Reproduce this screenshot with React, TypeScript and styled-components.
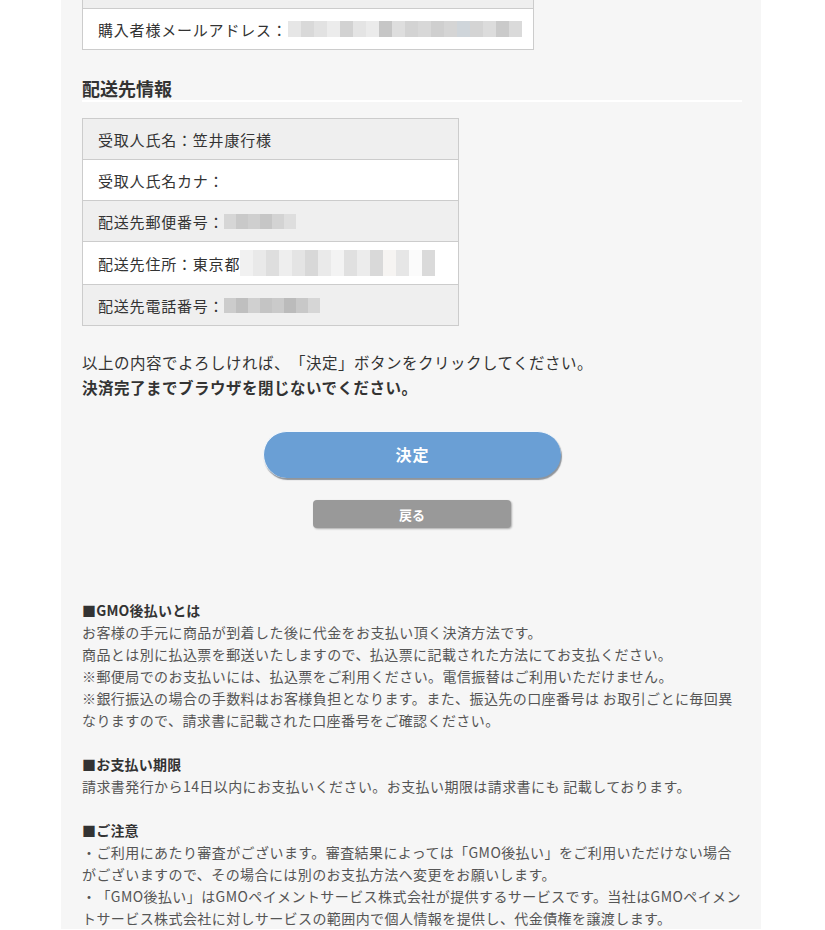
import React from "react";
import styled, { createGlobalStyle } from "styled-components";

const Global = createGlobalStyle`
  html, body { margin: 0; padding: 0; background: #ffffff; }
  body {
    font-family: "Noto Sans CJK JP", "Noto Sans", sans-serif;
    color: #333;
    text-spacing-trim: space-all;
  }
`;

const Page = styled.div`
  width: 700px;
  margin: -33px 0 0 61px;
  background: #f6f6f6;
  padding: 0 19px 0 21px;
  box-sizing: border-box;
`;

const Table = styled.div<{ $w: number }>`
  width: ${(p) => p.$w}px;
  box-sizing: border-box;
  border: 1px solid #cccccc;
  display: flex;
  flex-direction: column;
`;

const Row = styled.div<{ $alt?: boolean }>`
  display: flex;
  align-items: center;
  min-height: 40px;
  padding: 0 15px;
  background: ${(p) => (p.$alt ? "#efefef" : "#ffffff")};
  font-size: 15px;
  letter-spacing: 0.8px;
  white-space: nowrap;
  color: #333;
  & + & { border-top: 1px solid #cccccc; }
`;

const Mosaic = styled.div<{ $h: number; $cw: number }>`
  display: inline-flex;
  flex-shrink: 0;
  height: ${(p) => p.$h}px;
  margin: ${(p) => (p.$h > 20 ? "8px 0" : "0")};
  & > span { width: ${(p) => p.$cw}px; height: 100%; display: block; }
`;

const Cell = styled.span<{ $c: string }>`
  background: ${(p) => p.$c};
`;

const Heading = styled.h2`
  margin: 26px 0 16px;
  font-size: 18px;
  line-height: 24px;
  font-weight: 700;
  color: #333;
  border-bottom: 2px solid #ffffff;
`;

const Notice = styled.p`
  margin: 24px 0 0;
  font-size: 15.5px;
  line-height: 25px;
  letter-spacing: 0.5px;
  color: #333;
`;

const Strong = styled.strong`
  font-weight: 700;
  letter-spacing: 0.5px;
`;

const Buttons = styled.div`
  margin-top: 31px;
  display: flex;
  flex-direction: column;
  align-items: center;
  gap: 22px;
`;

const PrimaryButton = styled.button`
  width: 298px;
  height: 47px;
  padding: 0 0 3px;
  border: none;
  border-top: 1px solid #f4f8fc;
  border-left: 1px solid #f4f8fc;
  border-radius: 24px;
  background: #6a9fd5;
  box-shadow: 1px 2px 1px rgba(60, 70, 80, 0.55);
  color: #fff;
  font-family: inherit;
  font-size: 16px;
  font-weight: 700;
  letter-spacing: 1px;
  cursor: pointer;
`;

const BackButton = styled.button`
  width: 198px;
  height: 28px;
  border: none;
  border-radius: 4px;
  background: #999999;
  box-shadow: 1px 1px 2px rgba(0, 0, 0, 0.3);
  color: #fff;
  font-family: inherit;
  font-size: 13px;
  font-weight: 700;
  cursor: pointer;
`;

const Info = styled.div`
  margin-top: 71px;
  font-size: 14px;
  line-height: 22px;
  letter-spacing: 0.42px;
  color: #555;
  white-space: nowrap;
`;

const InfoTitle = styled.div`
  font-weight: 700;
  letter-spacing: 0.2px;
  color: #333;
`;

const Spacer = styled.div`
  height: 22px;
`;

const email = ["#e6e6e6","#d9d9d9","#e2e2e2","#ececec","#d2d2d2","#e4e4e4","#ebebeb","#c6c6c6","#dedede","#d3d3d3","#d8d8d8","#cfcfcf","#d5d5d5","#cfd5da","#d4d4d4","#dcdcdc","#cacaca","#dadada"];
const postal = ["#d6d6d6","#c9c9c9","#cfcfcf","#c6c6c6","#d3d3d3","#dedede"];
const address = ["#f1f1f1","#e9e9e9","#dedede","#eeeeee","#e4e4e4","#d8d8d8","#eaeaea","#f3f3f3","#e0e0e0","#ececec","#d9d9d9","#f6f4f2","#e6e6e6","#fbfbfb","#dadada"];
const phone = ["#cccccc","#bfbfbf","#d0d0d0","#c4c4c4","#cacaca","#bbbbbb","#c8c8c8","#d6d6d6"];

const Blur = ({ colors, h, cw }: { colors: string[]; h: number; cw: number }) => (
  <Mosaic $h={h} $cw={cw}>
    {colors.map((c, i) => (
      <Cell key={i} $c={c} />
    ))}
  </Mosaic>
);

export default function App() {
  return (
    <>
      <Global />
      <Page>
        <Table $w={452}>
          <Row $alt />
          <Row>
            購入者様メールアドレス：<Blur colors={email} h={16} cw={13} />
          </Row>
        </Table>

        <Heading>配送先情報</Heading>
        <Table $w={377}>
          <Row $alt>受取人氏名：笠井康行様</Row>
          <Row>受取人氏名カナ：</Row>
          <Row $alt>
            配送先郵便番号：<Blur colors={postal} h={15} cw={12} />
          </Row>
          <Row>
            配送先住所：東京都<Blur colors={address} h={26} cw={13} />
          </Row>
          <Row $alt>
            配送先電話番号：<Blur colors={phone} h={15} cw={12} />
          </Row>
        </Table>

        <Notice>
          以上の内容でよろしければ、「決定」ボタンをクリックしてください。
          <br />
          <Strong>決済完了までブラウザを閉じないでください。</Strong>
        </Notice>

        <Buttons>
          <PrimaryButton>決定</PrimaryButton>
          <BackButton>戻る</BackButton>
        </Buttons>

        <Info>
          <InfoTitle>■GMO後払いとは</InfoTitle>
          お客様の手元に商品が到着した後に代金をお支払い頂く決済方法です。
          <br />
          商品とは別に払込票を郵送いたしますので、払込票に記載された方法にてお支払ください。
          <br />
          ※郵便局でのお支払いには、払込票をご利用ください。電信振替はご利用いただけません。
          <br />
          ※銀行振込の場合の手数料はお客様負担となります。また、振込先の口座番号は お取引ごとに毎回異
          <br />
          なりますので、請求書に記載された口座番号をご確認ください。
          <Spacer />
          <InfoTitle>■お支払い期限</InfoTitle>
          請求書発行から14日以内にお支払いください。お支払い期限は請求書にも 記載しております。
          <Spacer />
          <InfoTitle>■ご注意</InfoTitle>
          ・ご利用にあたり審査がございます。審査結果によっては「GMO後払い」をご利用いただけない場合
          <br />
          がございますので、その場合には別のお支払方法へ変更をお願いします。
          <br />
          ・「GMO後払い」はGMOペイメントサービス株式会社が提供するサービスです。当社はGMOペイメン
          <br />
          トサービス株式会社に対しサービスの範囲内で個人情報を提供し、代金債権を譲渡します。
        </Info>
      </Page>
    </>
  );
}
